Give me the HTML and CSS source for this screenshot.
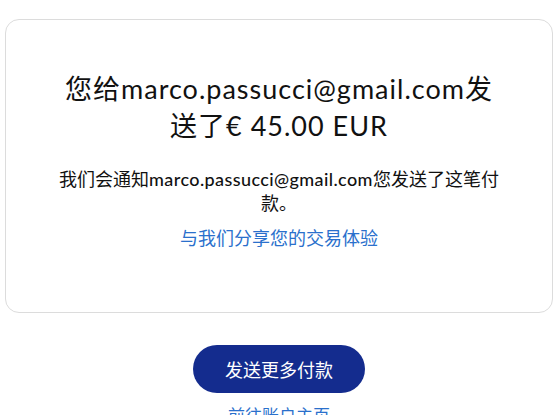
FILE: index.html
```html
<!DOCTYPE html>
<html lang="zh-CN">
<head>
    <meta charset="UTF-8">
    <meta name="viewport" content="width=device-width, initial-scale=1.0">
    <title>付款已发送</title>
    <link rel="stylesheet" href="styles.css">
</head>
<body>
    <div class="page">
        <!-- confirmation card -->
        <div class="card">
            <h1 class="title">您给marco.passucci@gmail.com发送了€ 45.00 EUR</h1>
            <p class="note">我们会通知<span class="email">marco.passucci@gmail.com</span>您发送了这笔付款。</p>
            <a class="feedback" href="#">与我们分享您的交易体验</a>
        </div>
        <div class="actions">
            <button type="button" class="primary">发送更多付款</button>
            <a class="secondary" href="#">前往账户主页</a>
        </div>
    </div>
</body>
</html>
```

FILE: styles.css
```css
body { margin: 0; font-family: Lato, "Noto Sans CJK SC", sans-serif; color: #111; background: #fff; }
.page { padding: 19px 5px 0; }
.card { border: 1px solid #dcdcdc; border-radius: 14px; padding: 50px 20px 62px; display: flex; flex-direction: column; align-items: center; text-align: center; }
.title { max-width: 442px; margin: 0; font-size: 27px; font-weight: 400; line-height: 37px; letter-spacing: 1px; color: #111; }
.note { max-width: 444px; margin: 23px 0 0; font-size: 18px; line-height: 24px; color: #111; }
.note .email { font-weight: 500; letter-spacing: 0.4px; }
.feedback { margin-top: 11px; font-size: 18px; line-height: 24px; color: #2a70cc; text-decoration: none; }
.actions { display: flex; flex-direction: column; align-items: center; padding-top: 32px; }
.primary { width: 172px; height: 48px; border: none; border-radius: 24px; background: #142c8e; color: #fff; font-family: inherit; font-size: 18px; cursor: pointer; }
.secondary { margin-top: 9px; font-size: 17px; color: #2a70cc; text-decoration: none; }
```
